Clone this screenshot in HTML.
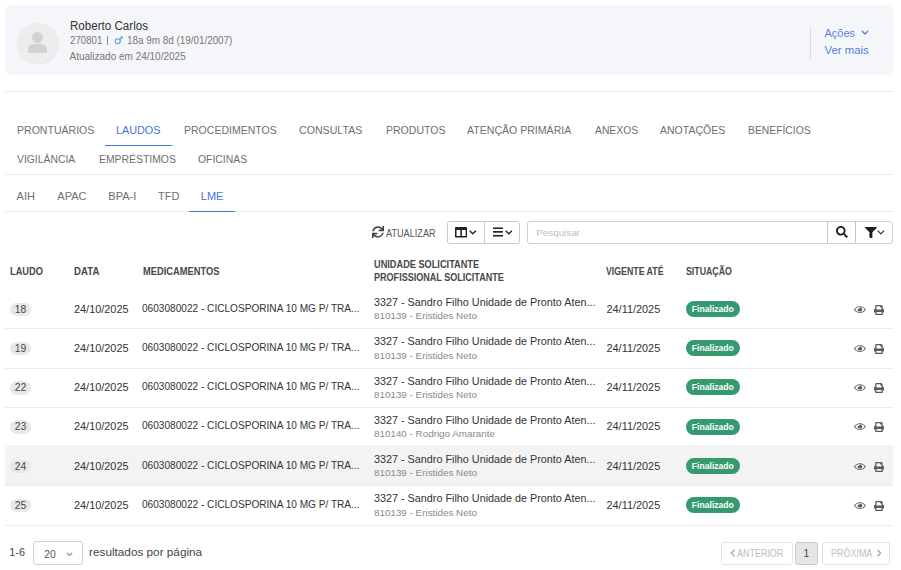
<!DOCTYPE html>
<html><head><meta charset="utf-8">
<style>
html,body{margin:0;padding:0;background:#fff;}
body{width:901px;height:570px;position:relative;overflow:hidden;font-family:"Liberation Sans",sans-serif;color:#333;}
.a{position:absolute;white-space:nowrap;line-height:1;}
.card{position:absolute;left:5px;top:4.5px;width:888px;height:70px;background:#f4f6f9;border-radius:6px;}
.hl{position:absolute;height:1px;background:#ebebeb;}
.tab{position:absolute;white-space:nowrap;line-height:1;font-size:11px;color:#6e6e6e;transform-origin:0 0;}
.th{position:absolute;white-space:nowrap;line-height:1;font-size:10.8px;font-weight:bold;color:#484848;transform-origin:0 0;}
.row{position:absolute;left:5px;width:888px;height:39.26px;border-bottom:1px solid #ebebeb;box-sizing:border-box;}
.badge{position:absolute;left:5px;top:12.5px;width:20.6px;height:13.5px;border-radius:7px;background:#e8e8e8;font-size:10.3px;color:#444;text-align:center;line-height:14px;padding-left:0.5px;box-sizing:border-box;}
.c1{position:absolute;left:69px;top:13.7px;font-size:10.9px;white-space:nowrap;line-height:1;}
.c2{position:absolute;left:137px;top:13.7px;font-size:10.1px;white-space:nowrap;line-height:1;}
.c3{position:absolute;left:369px;top:7.1px;font-size:10.8px;white-space:nowrap;line-height:1;}
.c3b{position:absolute;left:369px;top:21.3px;font-size:9.85px;color:#8a8a8a;white-space:nowrap;line-height:1;}
.c4{position:absolute;left:601.5px;top:13.7px;font-size:10.9px;white-space:nowrap;line-height:1;}
.fin{position:absolute;left:681px;top:10.9px;width:53.7px;height:16px;border-radius:8px;background:#359a6e;color:#fff;font-weight:bold;font-size:8.6px;text-align:center;line-height:16px;}
.eye{position:absolute;left:849px;top:14.7px;}
.prt{position:absolute;left:869px;top:14.7px;}
</style></head>
<body>
<div class="card"></div>
<!-- avatar -->
<div style="position:absolute;left:17px;top:23px;width:40.5px;height:40px;border-radius:50%;background:#ededee;box-shadow:0.5px 1px 2px rgba(0,0,0,0.07);"></div>
<div style="position:absolute;left:32.1px;top:31.6px;width:11px;height:11px;border-radius:50%;background:#d2d2d2;"></div>
<div style="position:absolute;left:27.8px;top:43.9px;width:19.4px;height:9.3px;border-radius:5.5px 5.5px 1px 1px;background:#d2d2d2;"></div>

<div class="a" style="left:69.5px;top:20.2px;font-size:12.3px;color:#333;transform:scaleX(0.943);transform-origin:0 0;">Roberto Carlos</div>
<div class="a" style="left:69.5px;top:35.4px;font-size:10.6px;color:#777;transform:scaleX(0.915);transform-origin:0 0;">270801</div><div style="position:absolute;left:106.8px;top:36.2px;width:1px;height:9.3px;background:#8a8a8a;"></div><svg style="position:absolute;left:114px;top:35.7px" width="10" height="9" viewBox="0 0 10 9"><circle cx="3.8" cy="5.3" r="2.5" fill="none" stroke="#5a9be6" stroke-width="1.1"/><line x1="5.6" y1="3.5" x2="7.8" y2="1.3" stroke="#5a9be6" stroke-width="1.1"/><path d="M6 0.5 L8.7 0.5 L8.7 3.2 Z" fill="#5a9be6"/></svg><div class="a" style="left:127.3px;top:35.4px;font-size:10.6px;color:#777;transform:scaleX(0.932);transform-origin:0 0;">18a 9m 8d (19/01/2007)</div>
<div class="a" style="left:69.5px;top:52px;font-size:10px;color:#777;">Atualizado em 24/10/2025</div>

<div style="position:absolute;left:810px;top:26px;width:1px;height:33px;background:#dcdde0;"></div>
<div class="a" style="left:824.5px;top:28px;font-size:11px;color:#5780e0;">Ações</div>
<svg style="position:absolute;left:861px;top:30px" width="8" height="5" viewBox="0 0 8 5"><path d="M0.8 0.8 L4 4 L7.2 0.8" fill="none" stroke="#5780e0" stroke-width="1.25"/></svg>
<div class="a" style="left:824.5px;top:45px;font-size:11.4px;color:#5780e0;">Ver mais</div>

<div class="hl" style="left:5px;top:91px;width:888px;"></div>

<!-- tabs -->
<div class="tab" style="left:16.6px;top:125px;transform:scaleX(0.959);">PRONTUÁRIOS</div>
<div class="tab" style="left:116.2px;top:125px;color:#4574d8;transform:scaleX(0.984);">LAUDOS</div>
<div style="position:absolute;left:105px;top:144.5px;width:67px;height:1.6px;background:#4574d8;"></div>
<div class="tab" style="left:184px;top:125px;transform:scaleX(0.956);">PROCEDIMENTOS</div>
<div class="tab" style="left:299px;top:125px;transform:scaleX(0.965);">CONSULTAS</div>
<div class="tab" style="left:385.7px;top:125px;transform:scaleX(0.956);">PRODUTOS</div>
<div class="tab" style="left:467.2px;top:125px;transform:scaleX(0.96);">ATENÇÃO PRIMÁRIA</div>
<div class="tab" style="left:594.6px;top:125px;transform:scaleX(0.94);">ANEXOS</div>
<div class="tab" style="left:659.8px;top:125px;transform:scaleX(0.955);">ANOTAÇÕES</div>
<div class="tab" style="left:748.4px;top:125px;transform:scaleX(0.94);">BENEFÍCIOS</div>
<div class="tab" style="left:16.6px;top:154.4px;transform:scaleX(0.943);">VIGILÂNCIA</div>
<div class="tab" style="left:98.8px;top:154.4px;transform:scaleX(0.946);">EMPRÉSTIMOS</div>
<div class="tab" style="left:197.8px;top:154.4px;transform:scaleX(0.946);">OFICINAS</div>
<div class="hl" style="left:5px;top:174px;width:888px;"></div>

<div class="tab" style="left:16.6px;top:191px;">AIH</div>
<div class="tab" style="left:57.3px;top:191px;">APAC</div>
<div class="tab" style="left:108.3px;top:191px;">BPA-I</div>
<div class="tab" style="left:158px;top:191px;">TFD</div>
<div class="tab" style="left:200.8px;top:191px;color:#4574d8;">LME</div>
<div class="hl" style="left:5px;top:211px;width:888px;"></div>
<div style="position:absolute;left:189px;top:210.6px;width:46px;height:1.8px;background:#4574d8;"></div>

<!-- toolbar -->
<svg style="position:absolute;left:372px;top:226px" width="12" height="12" viewBox="0 0 512 512"><path fill="#444" d="M440.65 12.57l4 82.77A247.16 247.16 0 0 0 255.83 8C134.73 8 33.91 94.92 12.29 209.82A12 12 0 0 0 24.09 224h49.05a12 12 0 0 0 11.67-9.26 175.91 175.910 0 0 1 317-56.940l-101.46-4.86a12 12 0 0 0-12.570 12v47.410a12 12 0 0 0 12 12H500a12 12 0 0 0 12-12V12a12 12 0 0 0-12-12h-47.370a12 12 0 0 0-11.980 12.570zM255.830 432a175.610 175.610 0 0 1-146-77.800l101.800 4.870a12 12 0 0 0 12.570-12v-47.400a12 12 0 0 0-12-12H12a12 12 0 0 0-12 12V500a12 12 0 0 0 12 12h47.350a12 12 0 0 0 12-12.600l-4.150-82.570A247.170 247.170 0 0 0 255.830 504c121.110 0 221.930-86.920 243.550-201.820a12 12 0 0 0-11.800-14.180h-49.050a12 12 0 0 0-11.670 9.260A175.860 175.860 0 0 1 255.830 432z"/></svg>
<div class="a" style="left:385.8px;top:228px;font-size:10.9px;color:#555;transform:scaleX(0.84);transform-origin:0 0;">ATUALIZAR</div>
<div style="position:absolute;left:446.6px;top:221px;width:73.9px;height:22.8px;border:1px solid #c9c9c9;border-radius:3px;box-sizing:border-box;"></div>
<div style="position:absolute;left:483.5px;top:221px;width:1px;height:22.8px;background:#c9c9c9;"></div>
<svg style="position:absolute;left:455.2px;top:226.3px" width="12.2" height="14" viewBox="0 32 512 512"><path fill="#222" d="M464 32H48C21.49 32 0 53.49 0 80v352c0 26.51 21.49 48 48 48h416c26.51 0 48-21.49 48-48V80c0-26.51-21.49-48-48-48zM224 416H64V160h160v256zm224 0H288V160h160v256z"/></svg><svg style="position:absolute;left:468.6px;top:229.8px" width="8" height="5" viewBox="0 0 8 5"><path d="M0.7 0.7 L3.8 3.8 L6.9 0.7" fill="none" stroke="#222" stroke-width="1.3"/></svg>
<svg style="position:absolute;left:492.8px;top:227.3px" width="10.5" height="10" viewBox="0 0 11 10" preserveAspectRatio="none"><rect x="0" y="0.4" width="11" height="1.6" fill="#2a2a2a"/><rect x="0" y="4" width="11" height="1.7" fill="#2a2a2a"/><rect x="0" y="7.9" width="11" height="1.7" fill="#2a2a2a"/></svg><svg style="position:absolute;left:504.9px;top:229.8px" width="8" height="5" viewBox="0 0 8 5"><path d="M0.7 0.7 L3.8 3.8 L6.9 0.7" fill="none" stroke="#222" stroke-width="1.3"/></svg>
<div style="position:absolute;left:527.3px;top:221px;width:365.6px;height:23px;border:1px solid #cfcfcf;border-radius:3px;box-sizing:border-box;"></div>
<div style="position:absolute;left:827px;top:221px;width:1px;height:23px;background:#c6c6c6;"></div>
<div style="position:absolute;left:855px;top:221px;width:1px;height:23px;background:#c6c6c6;"></div>
<div class="a" style="left:536.3px;top:228.3px;font-size:9.8px;color:#c0c0c0;">Pesquisar</div>
<svg style="position:absolute;left:836px;top:226.3px" width="11.8" height="11.8" viewBox="0 0 512 512"><path fill="#1e1e1e" d="M505 442.7L405.3 343c-4.5-4.5-10.6-7-17-7H372c27.6-35.3 44-79.7 44-128C416 93.1 322.9 0 208 0S0 93.1 0 208s93.1 208 208 208c48.3 0 92.7-16.4 128-44v16.3c0 6.4 2.5 12.5 7 17l99.7 99.7c9.4 9.4 24.6 9.4 33.9 0l28.3-28.3c9.4-9.4 9.4-24.6.1-34zM208 336c-70.7 0-128-57.2-128-128 0-70.7 57.2-128 128-128 70.7 0 128 57.2 128 128 0 70.7-57.2 128-128 128z"/></svg>
<svg style="position:absolute;left:865px;top:226.5px" width="11.8" height="11.8" viewBox="0 0 512 512"><path fill="#1e1e1e" d="M487.976 0H24.028C2.71 0-8.047 25.866 7.058 40.971L192 225.941V432c0 7.831 3.821 15.17 10.237 19.662l80 55.98C298.02 518.69 320 507.493 320 487.98V225.941l184.947-184.97C520.021 25.896 509.338 0 487.976 0z"/></svg><svg style="position:absolute;left:877px;top:229.7px" width="8" height="5" viewBox="0 0 8 5"><path d="M0.7 0.7 L3.9 3.9 L7.1 0.7" fill="none" stroke="#333" stroke-width="1.2"/></svg>

<!-- table header -->
<div class="th" style="left:10.4px;top:266px;transform:scaleX(0.855);">LAUDO</div>
<div class="th" style="left:74px;top:266px;transform:scaleX(0.893);">DATA</div>
<div class="th" style="left:142.5px;top:266px;transform:scaleX(0.862);">MEDICAMENTOS</div>
<div class="th" style="left:374.3px;top:259px;transform:scaleX(0.852);">UNIDADE SOLICITANTE</div>
<div class="th" style="left:374.3px;top:272.3px;transform:scaleX(0.838);">PROFISSIONAL SOLICITANTE</div>
<div class="th" style="left:606.2px;top:266px;transform:scaleX(0.8125);">VIGENTE ATÉ</div>
<div class="th" style="left:686.2px;top:266px;transform:scaleX(0.812);">SITUAÇÃO</div>

<!-- rows -->
<div id="rows"><div class="row" style="top:290.00px;"><div class="badge">18</div><div class="c1">24/10/2025</div><div class="c2">0603080022 - CICLOSPORINA 10 MG P/ TRA...</div><div class="c3">3327 - Sandro Filho Unidade de Pronto Aten...</div><div class="c3b">810139 - Eristides Neto</div><div class="c4">24/11/2025</div><div class="fin">Finalizado</div><svg class="eye" width="11.8" height="9.2" viewBox="0 0 576 512" preserveAspectRatio="none"><path fill="#5a5a5a" d="M288 144a110.94 110.94 0 0 0-31.24 5 55.4 55.4 0 0 1 7.24 27 56 56 0 0 1-56 56 55.4 55.4 0 0 1-27-7.24A111.71 111.71 0 1 0 288 144zm284.52 97.4C518.290 135.590 410.930 64 288 64S57.68 135.64 3.48 241.41a32.35 32.35 0 0 0 0 29.19C57.71 376.41 165.07 448 288 448s230.32-71.64 284.52-177.41a32.35 32.35 0 0 0 0-29.19zM288 400c-98.65 0-189.090-55-237.930-144C98.910 167 189.340 112 288 112s189.090 55 237.930 144C477.100 345 386.660 400 288 400z"/></svg><svg class="prt" width="10" height="10" viewBox="0 0 512 512"><path fill="#5a5a5a" d="M448 192V77.25c0-8.49-3.37-16.62-9.37-22.630L393.370 9.370c-6-6-14.140-9.370-22.630-9.370H96C78.330 0 64 14.330 64 32v160c-35.350 0-64 28.650-64 64v112c0 8.840 7.160 16 16 16h48v96c0 17.670 14.330 32 32 32h320c17.670 0 32-14.330 32-32v-96h48c8.840 0 16-7.160 16-16V256c0-35.350-28.650-64-64-64zm-64 256H128v-96h256v96zm0-224H128V64h192v48c0 8.840 7.160 16 16 16h48v96z"/></svg></div>
<div class="row" style="top:329.26px;"><div class="badge">19</div><div class="c1">24/10/2025</div><div class="c2">0603080022 - CICLOSPORINA 10 MG P/ TRA...</div><div class="c3">3327 - Sandro Filho Unidade de Pronto Aten...</div><div class="c3b">810139 - Eristides Neto</div><div class="c4">24/11/2025</div><div class="fin">Finalizado</div><svg class="eye" width="11.8" height="9.2" viewBox="0 0 576 512" preserveAspectRatio="none"><path fill="#5a5a5a" d="M288 144a110.94 110.94 0 0 0-31.24 5 55.4 55.4 0 0 1 7.24 27 56 56 0 0 1-56 56 55.4 55.4 0 0 1-27-7.24A111.71 111.71 0 1 0 288 144zm284.52 97.4C518.290 135.590 410.930 64 288 64S57.68 135.64 3.48 241.41a32.35 32.35 0 0 0 0 29.19C57.71 376.41 165.07 448 288 448s230.32-71.64 284.52-177.41a32.35 32.35 0 0 0 0-29.19zM288 400c-98.65 0-189.090-55-237.930-144C98.910 167 189.340 112 288 112s189.090 55 237.930 144C477.100 345 386.660 400 288 400z"/></svg><svg class="prt" width="10" height="10" viewBox="0 0 512 512"><path fill="#5a5a5a" d="M448 192V77.25c0-8.49-3.37-16.62-9.37-22.630L393.370 9.370c-6-6-14.140-9.370-22.630-9.370H96C78.330 0 64 14.330 64 32v160c-35.350 0-64 28.650-64 64v112c0 8.840 7.160 16 16 16h48v96c0 17.670 14.330 32 32 32h320c17.670 0 32-14.330 32-32v-96h48c8.840 0 16-7.160 16-16V256c0-35.350-28.650-64-64-64zm-64 256H128v-96h256v96zm0-224H128V64h192v48c0 8.840 7.160 16 16 16h48v96z"/></svg></div>
<div class="row" style="top:368.52px;"><div class="badge">22</div><div class="c1">24/10/2025</div><div class="c2">0603080022 - CICLOSPORINA 10 MG P/ TRA...</div><div class="c3">3327 - Sandro Filho Unidade de Pronto Aten...</div><div class="c3b">810139 - Eristides Neto</div><div class="c4">24/11/2025</div><div class="fin">Finalizado</div><svg class="eye" width="11.8" height="9.2" viewBox="0 0 576 512" preserveAspectRatio="none"><path fill="#5a5a5a" d="M288 144a110.94 110.94 0 0 0-31.24 5 55.4 55.4 0 0 1 7.24 27 56 56 0 0 1-56 56 55.4 55.4 0 0 1-27-7.24A111.71 111.71 0 1 0 288 144zm284.52 97.4C518.290 135.590 410.930 64 288 64S57.68 135.64 3.48 241.41a32.35 32.35 0 0 0 0 29.19C57.71 376.41 165.07 448 288 448s230.32-71.64 284.52-177.41a32.35 32.35 0 0 0 0-29.19zM288 400c-98.65 0-189.090-55-237.930-144C98.910 167 189.340 112 288 112s189.090 55 237.930 144C477.100 345 386.660 400 288 400z"/></svg><svg class="prt" width="10" height="10" viewBox="0 0 512 512"><path fill="#5a5a5a" d="M448 192V77.25c0-8.49-3.37-16.62-9.37-22.630L393.370 9.370c-6-6-14.140-9.370-22.630-9.370H96C78.330 0 64 14.330 64 32v160c-35.350 0-64 28.650-64 64v112c0 8.840 7.160 16 16 16h48v96c0 17.670 14.330 32 32 32h320c17.670 0 32-14.330 32-32v-96h48c8.840 0 16-7.160 16-16V256c0-35.350-28.650-64-64-64zm-64 256H128v-96h256v96zm0-224H128V64h192v48c0 8.840 7.160 16 16 16h48v96z"/></svg></div>
<div class="row" style="top:407.78px;"><div class="badge">23</div><div class="c1">24/10/2025</div><div class="c2">0603080022 - CICLOSPORINA 10 MG P/ TRA...</div><div class="c3">3327 - Sandro Filho Unidade de Pronto Aten...</div><div class="c3b">810140 - Rodrigo Amarante</div><div class="c4">24/11/2025</div><div class="fin">Finalizado</div><svg class="eye" width="11.8" height="9.2" viewBox="0 0 576 512" preserveAspectRatio="none"><path fill="#5a5a5a" d="M288 144a110.94 110.94 0 0 0-31.24 5 55.4 55.4 0 0 1 7.24 27 56 56 0 0 1-56 56 55.4 55.4 0 0 1-27-7.24A111.71 111.71 0 1 0 288 144zm284.52 97.4C518.290 135.590 410.930 64 288 64S57.68 135.64 3.48 241.41a32.35 32.35 0 0 0 0 29.19C57.71 376.41 165.07 448 288 448s230.32-71.64 284.52-177.41a32.35 32.35 0 0 0 0-29.19zM288 400c-98.65 0-189.090-55-237.930-144C98.910 167 189.340 112 288 112s189.090 55 237.930 144C477.100 345 386.660 400 288 400z"/></svg><svg class="prt" width="10" height="10" viewBox="0 0 512 512"><path fill="#5a5a5a" d="M448 192V77.25c0-8.49-3.37-16.62-9.37-22.630L393.370 9.370c-6-6-14.140-9.370-22.630-9.370H96C78.330 0 64 14.330 64 32v160c-35.350 0-64 28.650-64 64v112c0 8.840 7.160 16 16 16h48v96c0 17.670 14.330 32 32 32h320c17.670 0 32-14.330 32-32v-96h48c8.840 0 16-7.160 16-16V256c0-35.350-28.650-64-64-64zm-64 256H128v-96h256v96zm0-224H128V64h192v48c0 8.840 7.160 16 16 16h48v96z"/></svg></div>
<div class="row" style="top:447.04px;background:#f3f3f3;box-shadow:0 -2px 0 #f3f3f3;"><div class="badge">24</div><div class="c1">24/10/2025</div><div class="c2">0603080022 - CICLOSPORINA 10 MG P/ TRA...</div><div class="c3">3327 - Sandro Filho Unidade de Pronto Aten...</div><div class="c3b">810139 - Eristides Neto</div><div class="c4">24/11/2025</div><div class="fin">Finalizado</div><svg class="eye" width="11.8" height="9.2" viewBox="0 0 576 512" preserveAspectRatio="none"><path fill="#5a5a5a" d="M288 144a110.94 110.94 0 0 0-31.24 5 55.4 55.4 0 0 1 7.24 27 56 56 0 0 1-56 56 55.4 55.4 0 0 1-27-7.24A111.71 111.71 0 1 0 288 144zm284.52 97.4C518.290 135.590 410.930 64 288 64S57.68 135.64 3.48 241.41a32.35 32.35 0 0 0 0 29.19C57.71 376.41 165.07 448 288 448s230.32-71.64 284.52-177.41a32.35 32.35 0 0 0 0-29.19zM288 400c-98.65 0-189.090-55-237.930-144C98.910 167 189.340 112 288 112s189.090 55 237.930 144C477.100 345 386.660 400 288 400z"/></svg><svg class="prt" width="10" height="10" viewBox="0 0 512 512"><path fill="#5a5a5a" d="M448 192V77.25c0-8.49-3.37-16.62-9.37-22.630L393.370 9.370c-6-6-14.140-9.370-22.630-9.370H96C78.330 0 64 14.330 64 32v160c-35.350 0-64 28.650-64 64v112c0 8.840 7.160 16 16 16h48v96c0 17.670 14.330 32 32 32h320c17.670 0 32-14.330 32-32v-96h48c8.840 0 16-7.160 16-16V256c0-35.350-28.650-64-64-64zm-64 256H128v-96h256v96zm0-224H128V64h192v48c0 8.840 7.160 16 16 16h48v96z"/></svg></div>
<div class="row" style="top:486.30px;"><div class="badge">25</div><div class="c1">24/10/2025</div><div class="c2">0603080022 - CICLOSPORINA 10 MG P/ TRA...</div><div class="c3">3327 - Sandro Filho Unidade de Pronto Aten...</div><div class="c3b">810139 - Eristides Neto</div><div class="c4">24/11/2025</div><div class="fin">Finalizado</div><svg class="eye" width="11.8" height="9.2" viewBox="0 0 576 512" preserveAspectRatio="none"><path fill="#5a5a5a" d="M288 144a110.94 110.94 0 0 0-31.24 5 55.4 55.4 0 0 1 7.24 27 56 56 0 0 1-56 56 55.4 55.4 0 0 1-27-7.24A111.71 111.71 0 1 0 288 144zm284.52 97.4C518.290 135.590 410.930 64 288 64S57.68 135.64 3.48 241.41a32.35 32.35 0 0 0 0 29.19C57.71 376.41 165.07 448 288 448s230.32-71.64 284.52-177.41a32.35 32.35 0 0 0 0-29.19zM288 400c-98.65 0-189.090-55-237.930-144C98.910 167 189.340 112 288 112s189.090 55 237.930 144C477.100 345 386.660 400 288 400z"/></svg><svg class="prt" width="10" height="10" viewBox="0 0 512 512"><path fill="#5a5a5a" d="M448 192V77.25c0-8.49-3.37-16.62-9.37-22.630L393.370 9.370c-6-6-14.140-9.370-22.630-9.370H96C78.330 0 64 14.330 64 32v160c-35.350 0-64 28.650-64 64v112c0 8.840 7.160 16 16 16h48v96c0 17.670 14.330 32 32 32h320c17.670 0 32-14.330 32-32v-96h48c8.840 0 16-7.160 16-16V256c0-35.350-28.650-64-64-64zm-64 256H128v-96h256v96zm0-224H128V64h192v48c0 8.840 7.160 16 16 16h48v96z"/></svg></div></div><!--/rows-->

<!-- footer -->
<div class="a" style="left:9.3px;top:547px;font-size:10.8px;color:#444;">1-6</div>
<div style="position:absolute;left:33.2px;top:541.2px;width:49.6px;height:24.3px;border:1px solid #d0d0d0;border-radius:3px;box-sizing:border-box;"></div>
<div class="a" style="left:44.2px;top:550.3px;font-size:10.3px;color:#555;">20</div>
<svg style="position:absolute;left:66.3px;top:552.3px" width="8" height="5" viewBox="0 0 8 5"><path d="M0.8 0.8 L3.5 3.5 L6.2 0.8" fill="none" stroke="#8a8a8a" stroke-width="1.1"/></svg>
<div class="a" style="left:89.1px;top:546px;font-size:11.75px;color:#444;">resultados por página</div>

<div style="position:absolute;left:720.6px;top:541.7px;width:72px;height:23.3px;border:1px solid #e3e3e3;border-radius:3px;box-sizing:border-box;"></div>
<svg style="position:absolute;left:729.7px;top:549.3px" width="6" height="8" viewBox="0 0 6 8"><path d="M4.6 0.8 L1.4 4 L4.6 7.2" fill="none" stroke="#b0b0b0" stroke-width="1.6"/></svg><div class="a" style="left:737.4px;top:548.5px;font-size:10.2px;color:#bdbdbd;transform:scaleX(0.88);transform-origin:0 0;">ANTERIOR</div>
<div style="position:absolute;left:795.2px;top:541.7px;width:23.3px;height:23.3px;border:1px solid #c8c8c8;border-radius:3px;background:#e6e6e6;box-sizing:border-box;"></div>
<div class="a" style="left:803.6px;top:549px;font-size:10.2px;color:#444;">1</div>
<div style="position:absolute;left:821.9px;top:541.7px;width:68px;height:23.3px;border:1px solid #e3e3e3;border-radius:3px;box-sizing:border-box;"></div>
<div class="a" style="left:831.2px;top:548.5px;font-size:10.2px;color:#bdbdbd;transform:scaleX(0.88);transform-origin:0 0;">PRÓXIMA</div><svg style="position:absolute;left:875.8px;top:549.3px" width="6" height="8" viewBox="0 0 6 8"><path d="M1.4 0.8 L4.6 4 L1.4 7.2" fill="none" stroke="#b0b0b0" stroke-width="1.6"/></svg>
</body></html>
